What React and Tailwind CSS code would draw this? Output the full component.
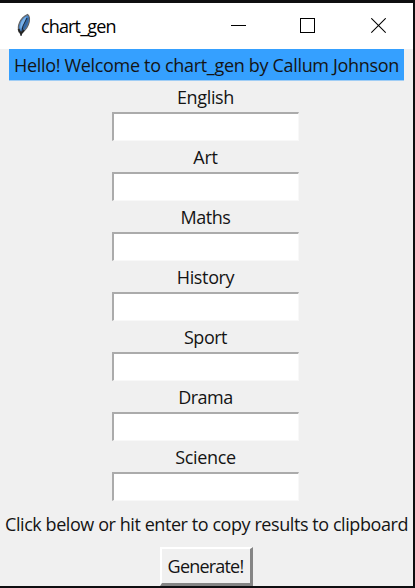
import React from "react";

const fields = [
  ["English", "tracking-[-0.35px]"],
  ["Art", "tracking-[-0.2px]"],
  ["Maths", "tracking-[-0.45px]"],
  ["History", "tracking-[-0.35px]"],
  ["Sport", "tracking-[-0.5px]"],
  ["Drama", "tracking-[-0.5px]"],
  ["Science", "tracking-[-0.35px]"],
];

function Feather() {
  return (
    <svg width="16" height="26" viewBox="0 0 16 26" className="shrink-0">
      <path d="M3 19C1 13 4 5 11.5 1.5C15 4 14 13 7 19Z" fill="#4b86c6" stroke="#666" strokeWidth="1.2" />
      <path d="M4.5 16C3.5 11 6 6 10.5 3.5L7 13Z" fill="#79b2ea" />
      <path d="M12.5 3C13.5 9 10 15 7 18L6.5 15Z" fill="#3468a5" />
      <path d="M11 5Q6 12 5 23" fill="none" stroke="#1b2430" strokeWidth="1" />
      <path d="M2.5 16L5 21L8 17" fill="none" stroke="#252525" strokeWidth="1.8" />
    </svg>
  );
}

export default function App() {
  return (
    <div className="flex h-[588px] w-[415px] flex-col overflow-hidden border-t-[3px] border-r-2 border-b-2 border-[#0e0e10] bg-[#f0f0f0] font-['Open_Sans','Noto_Sans',sans-serif] text-[18px] text-[#141414]">
      <header className="flex h-[46px] shrink-0 items-center bg-white pl-4 text-black">
        <Feather />
        <h1 className="ml-[9px] grow whitespace-nowrap pt-px text-[18px] tracking-[-0.85px]">chart_gen</h1>
        <div className="mr-[27px] flex items-center">
          <svg width="15" height="16" viewBox="0 0 15 16" shapeRendering="crispEdges"><path d="M0 7.5H15" stroke="#000" /></svg>
          <svg className="ml-[54px]" width="15" height="16" viewBox="0 0 15 16" shapeRendering="crispEdges"><path d="M.5 .5H14.5V14.5H.5Z" fill="none" stroke="#000" /></svg>
          <svg className="ml-[56px]" width="15" height="16" viewBox="0 0 15 16"><path d="M.3 .3L14.7 14.7M14.7 .3L.3 14.7" stroke="#000" strokeWidth="1.1" /></svg>
        </div>
      </header>
      <main className="flex grow flex-col items-center">
        <div className="flex h-8 w-[395px] items-center justify-center whitespace-nowrap border-b border-[#a0cdf5] bg-[#35a0ff] pt-[2px] tracking-[-0.32px]">
          Hello! Welcome to chart_gen by Callum Johnson
        </div>
        {fields.map(([name, tracking]) => (
          <label key={name} className="mr-[2px] flex h-[60px] shrink-0 flex-col items-center">
            <span className={`flex h-[31px] items-center pt-px ${tracking}`}>{name}</span>
            <input className="h-[29px] w-[187px] border-t-2 border-r border-b border-l-2 border-t-[#ababab] border-r-[#f8f8f8] border-b-[#f8f8f8] border-l-[#ababab] bg-white px-1 outline-none" />
          </label>
        ))}
        <p className="flex h-[46px] shrink-0 items-center whitespace-nowrap tracking-[-0.43px]">
          Click below or hit enter to copy results to clipboard
        </p>
        <button className="mr-px flex h-[39px] w-[93px] shrink-0 items-center justify-center border-t-2 border-r-[3px] border-b-[3px] border-l-2 border-t-white border-r-[#858585] border-b-[#858585] border-l-white tracking-[-0.8px]">
          Generate!
        </button>
      </main>
    </div>
  );
}
